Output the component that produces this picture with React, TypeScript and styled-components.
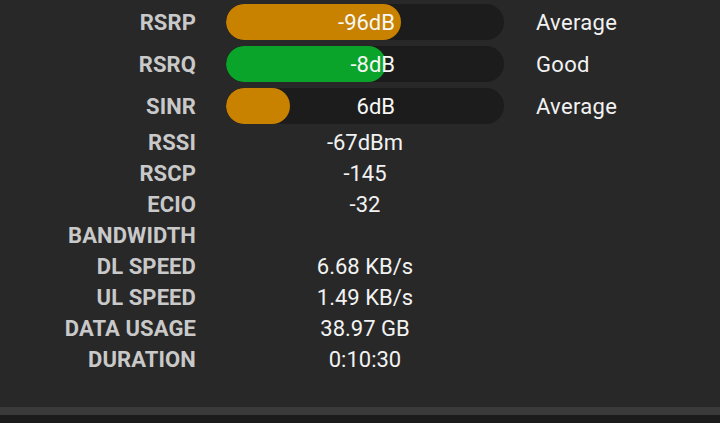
import React from "react";
import styled, { createGlobalStyle } from "styled-components";

const Global = createGlobalStyle`
  html, body { margin: 0; padding: 0; background: #1b1b1b; }
  body { font-family: Roboto, "Liberation Sans", sans-serif; }
`;

const Page = styled.div`
  width: 720px;
  height: 423px;
  display: flex;
  flex-direction: column;
  background: #1b1b1b;
  overflow: hidden;
`;

const Panel = styled.div`
  height: 407px;
  background: #282828;
  padding-top: 1px;
  box-sizing: border-box;
`;

const Grid = styled.div`
  display: grid;
  grid-template-columns: 196px 278px 1fr;
  grid-template-rows: repeat(3, 42px);
  grid-auto-rows: 31px;
  column-gap: 30px;
`;

const Label = styled.div`
  display: flex;
  align-items: center;
  justify-content: flex-end;
  font-size: 22px;
  font-weight: 700;
  color: #c9c9c9;
  white-space: nowrap;
  letter-spacing: 0.1px;
`;

const Value = styled.div`
  display: flex;
  align-items: center;
  justify-content: center;
  font-size: 22px;
  color: #f2f2f2;
  white-space: nowrap;
`;

const BarCell = styled.div`
  display: flex;
  align-items: center;
`;

const Track = styled.div`
  position: relative;
  width: 100%;
  height: 36px;
  border-radius: 18px;
  background: #1c1c1c;
  overflow: hidden;
`;

const Fill = styled.div<{ $color: string }>`
  position: absolute;
  left: 0;
  top: 0;
  bottom: 0;
  border-radius: 18px;
  background: ${(p) => p.$color};
`;

const BarText = styled.span`
  position: absolute;
  left: 50%;
  top: 0;
  bottom: 0;
  width: 62px;
  margin-left: -32px;
  display: flex;
  align-items: center;
  justify-content: flex-end;
  font-size: 22px;
  color: #f7f7f7;
  white-space: nowrap;
`;

const Status = styled.div`
  display: flex;
  align-items: center;
  padding-left: 2px;
  font-size: 22px;
  letter-spacing: 0.3px;
  color: #f2f2f2;
`;

const Empty = styled.div``;

const Divider = styled.div`
  height: 8px;
  background: #3a3a3a;
`;

const Bottom = styled.div`
  flex: 1;
  background: #1b1b1b;
`;

const ORANGE = "#c98100";
const GREEN = "#0aa42a";

const bars = [
  { label: "RSRP", value: "-96dB", pct: 175, color: ORANGE, status: "Average" },
  { label: "RSRQ", value: "-8dB", pct: 160, color: GREEN, status: "Good" },
  { label: "SINR", value: "6dB", pct: 64, color: ORANGE, status: "Average" },
];

const rows = [
  { label: "RSSI", value: "-67dBm" },
  { label: "RSCP", value: "-145" },
  { label: "ECIO", value: "-32" },
  { label: "BANDWIDTH", value: "" },
  { label: "DL SPEED", value: "6.68 KB/s" },
  { label: "UL SPEED", value: "1.49 KB/s" },
  { label: "DATA USAGE", value: "38.97 GB" },
  { label: "DURATION", value: "0:10:30" },
];

export default function App() {
  return (
    <>
      <Global />
      <Page>
        <Panel>
          <Grid>
            {bars.map((b) => (
              <React.Fragment key={b.label}>
                <Label>{b.label}</Label>
                <BarCell>
                  <Track>
                    <Fill $color={b.color} style={{ width: b.pct }} />
                    <BarText>{b.value}</BarText>
                  </Track>
                </BarCell>
                <Status>{b.status}</Status>
              </React.Fragment>
            ))}
            {rows.map((r) => (
              <React.Fragment key={r.label}>
                <Label>{r.label}</Label>
                <Value>{r.value}</Value>
                <Empty />
              </React.Fragment>
            ))}
          </Grid>
        </Panel>
        <Divider />
        <Bottom />
      </Page>
    </>
  );
}
